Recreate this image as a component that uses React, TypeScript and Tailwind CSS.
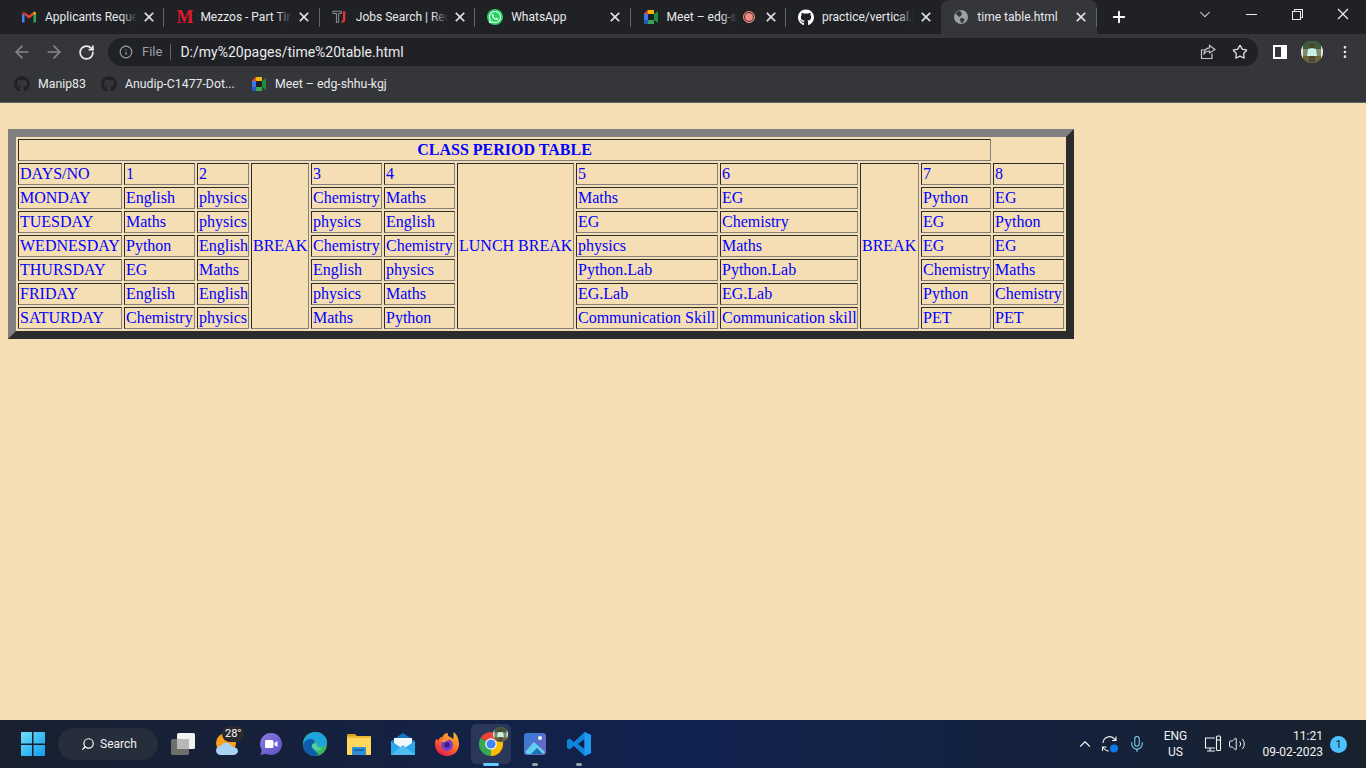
import React from "react";
import { FaGithub, FaWhatsapp } from "react-icons/fa";
import { VscClose, VscChromeMinimize, VscChromeRestore, VscChromeClose, VscChevronDown } from "react-icons/vsc";
import { ArrowLeft, ArrowRight, RotateCw, Info, Star, Plus, EllipsisVertical, Search, ChevronUp, Mic, Volume2 } from "lucide-react";

const ui = "font-['Roboto','Open_Sans',sans-serif]";

const Gmail = () => (
  <svg width="16" height="16" viewBox="0 0 16 16">
    <path d="M1 13.500V4l2.500 1.500v8H2a1 1 0 0 1-1-1z" fill="#4285f4" />
    <path d="M15 13.500V4l-2.500 1.500v8H14a1 1 0 0 0 1-1z" fill="#34a853" />
    <path d="M3.500 6V3L8 6.500 12.500 3v3L8 9.500z" fill="#ea4335" />
    <path d="M1 4.500C1 3 2.500 2.300 3.500 3v3z" fill="#c5221f" />
    <path d="M15 4.500C15 3 13.500 2.300 12.500 3v3z" fill="#fbbc04" />
  </svg>
);
const Mezzos = () => (
  <span className="font-['Liberation_Serif',serif] font-bold text-[18px] leading-none text-[#e0182d] w-4 text-center block">M</span>
);
const TJ = () => (
  <svg width="18" height="16" viewBox="0 0 18 16" fill="none">
    <path d="M1 1.500h9.500v2.500H7.500v10H5V4H1z" stroke="#9aa0a6" strokeWidth="1" />
    <path d="M11.500 1.500h3.500v9c0 3-2 4-4.500 4l.5-2.500c1 0 1.300-.5 1.300-1.500V1.500z" fill="#e8323c" />
  </svg>
);
const MeetIcon = ({ s = 16 }: { s?: number }) => (
  <svg width={s} height={s} viewBox="0 0 16 16">
    <path d="M1 5l4-4h6v4H5v1z" fill="#f4b400" />
    <path d="M1 5h4v6H1z" fill="#3b78e7" />
    <path d="M1 11h4v4H2.500A1.500 1.500 0 0 1 1 13.500z" fill="#2a56c6" />
    <path d="M5 11h6v4H5z" fill="#34a853" />
    <path d="M1 5l4-4v4z" fill="#ea4335" />
    <path d="M11 5v6h0l4 3V2l-4 3z" fill="#1e8e3e" />
    <path d="M5 5h6v6H5z" fill="#202124" />
  </svg>
);
const Globe = () => (
  <svg width="16" height="16" viewBox="0 0 16 16">
    <circle cx="8" cy="8" r="7" fill="#9aa0a6" />
    <path d="M7 1.500c-2 .5-3.500 1.500-4.500 3L5 7c1 1 1.500 1 2 .5l1-1c1-1 1-2 0-3.500zM9 9c-1 0-2 .5-2 1.500l1 3.500c2 0 3-1.500 3.500-3 .3-1-1-2-2.500-2z" fill="#35363a" />
  </svg>
);
const Share = () => (
  <svg width="16" height="16" viewBox="0 0 16 16" fill="none" stroke="#c4c7c5" strokeWidth="1.200">
    <path d="M12 9.500V14.500H1.500V6H5" />
    <path d="M9.500 1.500L15 5.500 9.500 9V7C7 7 5 8 3.800 10.500 4 7 6 4 9.500 3.800z" />
  </svg>
);
const Avatar = ({ s = 22 }: { s?: number }) => (
  <svg width={s} height={s} viewBox="0 0 22 22">
    <defs>
      <clipPath id={`av${s}`}>
        <circle cx="11" cy="11" r="11" />
      </clipPath>
    </defs>
    <g clipPath={`url(#av${s})`}>
      <rect width="22" height="22" fill="#7d8a68" />
      <rect y="0" width="22" height="8" fill="#3f5a3a" />
      <rect x="0" y="15" width="22" height="7" fill="#6a6238" />
      <rect x="0" width="2" height="22" fill="#e8e8e8" />
      <rect x="20" width="2" height="22" fill="#e8e8e8" />
      <path d="M7 8l4-1 4 1 1 7H6z" fill="#c8f0e8" />
      <circle cx="11" cy="5" r="2.200" fill="#5a3a28" />
      <rect x="8" y="15" width="6" height="6" fill="#4d4a3a" />
    </g>
  </svg>
);
const Tab = ({ icon, title, active, rec, sep = true, fade = true }: { icon: React.ReactNode; title: string; active?: boolean; rec?: boolean; sep?: boolean; fade?: boolean }) => (
  <div className={`relative flex items-center shrink-0 w-[155.400px] h-[34px] pl-3 ${active ? "bg-[#35363a] rounded-t-[8px]" : ""}`}>
    <span className="w-4 h-4 flex items-center justify-center shrink-0">{icon}</span>
    <span className={`relative ml-2 overflow-hidden whitespace-nowrap text-[12px] text-[#e8eaed] ${rec ? "w-[70px]" : "w-[92px]"}`}>
      {title}
      {fade && <span className="absolute right-0 top-0 h-full w-4 bg-gradient-to-r from-transparent to-[#202124]" />}
    </span>
    {rec && (
      <span className="ml-[6px] w-3 h-3 rounded-full bg-[#f28b82] border border-[#f28b82] shadow-[inset_0_0_0_1px_#202124] shrink-0" />
    )}
    <VscClose className="absolute left-[132px] top-[9px] text-[#e8eaed]" size={16} strokeWidth={0.8} />
    {sep && <span className="absolute right-0 top-[8px] h-[19px] w-px bg-[#5f6368]" />}
  </div>
);

const Bookmark = ({ icon, label, w }: { icon: React.ReactNode; label: string; w: string }) => (
  <div className={`flex items-center shrink-0 ${w}`}>
    <span className="w-4 h-4 flex items-center justify-center shrink-0">{icon}</span>
    <span className="ml-2 text-[12.300px] text-[#e8eaed] whitespace-nowrap">{label}</span>
  </div>
);

const cell = "border border-t-[#2e2a25] border-l-[#2e2a25] border-r-[#808080] border-b-[#808080] p-px text-left align-middle whitespace-nowrap overflow-hidden font-normal";

const widths = [104, 71, 52, 58, 71, 71, 117, 142, 138, 59, 70, 71];
const rows: [string, string, string, string, string, string, string, string, string][] = [
  ["MONDAY", "English", "physics", "Chemistry", "Maths", "Maths", "EG", "Python", "EG"],
  ["TUESDAY", "Maths", "physics", "physics", "English", "EG", "Chemistry", "EG", "Python"],
  ["WEDNESDAY", "Python", "English", "Chemistry", "Chemistry", "physics", "Maths", "EG", "EG"],
  ["THURSDAY", "EG", "Maths", "English", "physics", "Python.Lab", "Python.Lab", "Chemistry", "Maths"],
  ["FRIDAY", "English", "English", "physics", "Maths", "EG.Lab", "EG.Lab", "Python", "Chemistry"],
  ["SATURDAY", "Chemistry", "physics", "Maths", "Python", "Communication Skill", "Communication skill", "PET", "PET"],
];

const TimeTable = () => (
  <table className="table-fixed w-[1066px] border-separate border-spacing-[2px] border-[8px] border-t-[#808080] border-l-[#808080] border-r-[#2b2b2b] border-b-[#2b2b2b] font-['Liberation_Serif',serif] text-[16px] leading-[18px] text-[#0000ff]">
    <colgroup>
      {widths.map((w, i) => (
        <col key={i} style={{ width: w }} />
      ))}
    </colgroup>
    <tbody>
      <tr>
        <th colSpan={11} className={`${cell} !text-center !font-bold`}>CLASS PERIOD TABLE</th>
      </tr>
      <tr>
        <td className={cell}>DAYS/NO</td>
        <td className={cell}>1</td>
        <td className={cell}>2</td>
        <td rowSpan={7} className={cell}>BREAK</td>
        <td className={cell}>3</td>
        <td className={cell}>4</td>
        <td rowSpan={7} className={cell}>LUNCH BREAK</td>
        <td className={cell}>5</td>
        <td className={cell}>6</td>
        <td rowSpan={7} className={cell}>BREAK</td>
        <td className={cell}>7</td>
        <td className={cell}>8</td>
      </tr>
      {rows.map((r) => (
        <tr key={r[0]}>
          {r.map((c, i) => (
            <td key={i} className={cell}>{c}</td>
          ))}
        </tr>
      ))}
    </tbody>
  </table>
);

const Slot = ({ children, bar, active }: { children: React.ReactNode; bar?: boolean; active?: boolean }) => (
  <div className="relative w-[44px] h-[48px] flex items-center justify-center shrink-0">
    {active && <span className="absolute left-[2px] top-[4px] w-[40px] h-[40px] rounded-[5px] bg-white/10" />}
    <span className="relative flex">{children}</span>
    {bar && <span className={`absolute bottom-[2px] left-1/2 -translate-x-1/2 h-[3px] rounded-full ${active ? "w-4 bg-[#60cdff]" : "w-[6px] bg-[#9aa0a6]"}`} />}
  </div>
);

const WinLogo = () => (
  <svg width="24" height="24" viewBox="0 0 24 24">
    <defs>
      <linearGradient id="wl" x1="0" y1="0" x2="1" y2="1">
        <stop offset="0" stopColor="#6fe0f5" />
        <stop offset="1" stopColor="#0f9bf0" />
      </linearGradient>
    </defs>
    <path d="M0 1a1 1 0 0 1 1-1h10v11.500H0zM12.500 0H23a1 1 0 0 1 1 1v10.500H12.500zM0 13h11v11H1a1 1 0 0 1-1-1zM12.500 13H24v10a1 1 0 0 1-1 1H12.500z" fill="url(#wl)" />
  </svg>
);
const TaskView = () => (
  <svg width="26" height="24" viewBox="0 0 26 24">
    <rect x="7" y="1" width="18" height="16" rx="1.500" fill="#f1f1f1" />
    <rect x="1" y="7" width="18" height="16" rx="1.500" fill="#6e6e6e" />
    <rect x="7" y="7" width="12" height="10" fill="#b8b8b8" />
  </svg>
);
const Weather = () => (
  <div className="relative w-[24px] h-[24px]">
    <svg width="24" height="24" viewBox="0 0 24 24" className="absolute left-0 top-0">
      <circle cx="11" cy="11" r="10" fill="#f9a11b" />
      <path d="M6 23c-3 0-5-2-5-4.500S3 14 6 14c1-3 4-4 7-3 2 .5 4 2.500 4 4 4-.5 6 2 6 4s-2 4-5 4z" fill="#a9d3f5" />
    </svg>
    <span className={`absolute left-[7px] -top-[6px] px-[3px] h-[16px] rounded-full bg-[#2a2a2e] text-[11px] leading-[16px] text-white ${ui}`}>28°</span>
  </div>
);
const Chat = () => (
  <svg width="24" height="24" viewBox="0 0 24 24">
    <defs>
      <linearGradient id="ch" x1="0" y1="0" x2="1" y2="1">
        <stop offset="0" stopColor="#8c7ce0" />
        <stop offset="1" stopColor="#5b4fc4" />
      </linearGradient>
    </defs>
    <path d="M12 1a11 11 0 1 1-5 20.800L1.500 23l1.300-5A11 11 0 0 1 12 1z" fill="url(#ch)" />
    <rect x="6" y="8" width="8.500" height="8" rx="1.500" fill="#fff" />
    <path d="M15.500 11l3-2v6l-3-2z" fill="#fff" />
  </svg>
);
const Edge = () => (
  <svg width="24" height="24" viewBox="0 0 24 24">
    <defs>
      <linearGradient id="e1" x1="0" y1="0" x2="1" y2="1">
        <stop offset="0" stopColor="#33c6a5" />
        <stop offset="1" stopColor="#3bb54a" />
      </linearGradient>
    </defs>
    <circle cx="12" cy="12" r="12" fill="url(#e1)" />
    <path d="M0 12C1 4 8 0 13 0c6 0 11 5 11 10 0 3-3 5-6 5s-4-1-4-2c1-1 1-2 0-3-3-3-10-3-14 2z" fill="#1fa3dd" />
    <path d="M0 13c1-4 5-6 8-6s5 3 3 6c-1 2 0 6 4 9l1 .5C14 24 12 24 10 24 4 23 0 18 0 13z" fill="#0f5cae" />
    <path d="M9 13c1-2 3-2 4-1 1 3 3 4 6 4-2 3-5 3-7 2-2-1-4-3-3-5z" fill="#53d0a0" />
  </svg>
);
const Folder = () => (
  <svg width="24" height="22" viewBox="0 0 24 22">
    <path d="M0 2a1 1 0 0 1 1-1h7l3 3H0z" fill="#d3a21c" />
    <rect x="0" y="3" width="24" height="19" rx="1" fill="#ffd75e" />
    <rect y="3" width="24" height="2" fill="#e8b931" />
    <rect x="5" y="14" width="14" height="8" rx="1" fill="#2d8fd5" />
    <rect x="7" y="16" width="10" height="2" fill="#1568ad" />
  </svg>
);
const Mail = () => (
  <svg width="24" height="22" viewBox="0 0 24 22">
    <path d="M0 8L12 0l12 8v14H0z" fill="#1173c4" />
    <path d="M3 5h18v8l-9 5-9-5z" fill="#f3f6fa" />
    <path d="M0 8l12 8 12-8v14H0z" fill="#28a8ea" />
    <path d="M0 22L12 12l12 10z" fill="#50bdf2" />
  </svg>
);
const Firefox = () => (
  <svg width="24" height="24" viewBox="0 0 24 24">
    <defs>
      <linearGradient id="ff" x1="0.800" y1="0" x2="0.200" y2="1">
        <stop offset="0" stopColor="#ffc125" />
        <stop offset="0.500" stopColor="#ff6a2b" />
        <stop offset="1" stopColor="#e3134f" />
      </linearGradient>
    </defs>
    <path d="M12 24C5 24 0 19 0 12c0-2 .5-4 1.500-5.500C2 8 3 8.500 3.500 8 4 6 6 5 8 4.500 8 3 10 1 13 1c-1 2 0 3 2 4 1 .5 2 .5 3 2 1-1 .5-4 .5-7C22 2 24 8 24 12c0 7-5 12-12 12z" fill="url(#ff)" />
    <circle cx="12" cy="13" r="6" fill="#7a3fc4" />
    <circle cx="12" cy="13" r="2.800" fill="#3a1d8a" />
    <path d="M6 10c2-3 6-4 9-2-3 0-5 1-5 2z" fill="#ff9a2e" />
  </svg>
);
const ChromeLogo = () => (
  <svg width="24" height="24" viewBox="0 0 24 24">
    <path d="M12 12L1.600 6A12 12 0 0 1 22.400 6z" fill="#ea4335" />
    <path d="M12 12L22.400 6A12 12 0 0 1 12 24z" fill="#fbbc04" />
    <path d="M12 12L12 24A12 12 0 0 1 1.600 6z" fill="#34a853" />
    <circle cx="12" cy="12" r="5.800" fill="#fff" />
    <circle cx="12" cy="12" r="4.600" fill="#4285f4" />
  </svg>
);
const Photos = () => (
  <svg width="22" height="22" viewBox="0 0 22 22">
    <defs>
      <linearGradient id="ph" x1="0" y1="0" x2="1" y2="1">
        <stop offset="0" stopColor="#2f7fd6" />
        <stop offset="1" stopColor="#7a5fc0" />
      </linearGradient>
    </defs>
    <rect width="22" height="22" rx="3" fill="url(#ph)" />
    <circle cx="16" cy="5" r="2" fill="#f5f5f5" />
    <path d="M1 19l9-10 11 10-2 2H3z" fill="#5fd0ee" />
    <path d="M7 21l6-6 6 6z" fill="#1d6fb8" />
  </svg>
);
const VSCode = () => (
  <svg width="24" height="24" viewBox="0 0 24 24">
    <path d="M17.500 0L24 3v18l-6.500 3L7 14l-4.500 3.500L0 16v-8l2.500-1.500L7 10zM17.500 7L11 12l6.500 5z" fill="#0f84d6" />
    <path d="M17.500 0L24 3v18l-6.500 3z" fill="#1f9cf0" />
  </svg>
);
const Sync = () => (
  <svg width="20" height="20" viewBox="0 0 20 20" fill="none" stroke="#f2f2f2" strokeWidth="1.100">
    <path d="M3 9a6.500 6.500 0 0 1 11-4.500L16 6.500M16 2.500v4h-4" />
    <path d="M9 17a6.500 6.500 0 0 1-5-2.500L2.500 13M2.500 17v-4h4" />
    <circle cx="14" cy="14.500" r="4" fill="#0f78e8" stroke="none" />
  </svg>
);
const Net = () => (
  <svg width="18" height="18" viewBox="0 0 18 18" fill="none" stroke="#f2f2f2" strokeWidth="1.100">
    <path d="M11 3H1.500v10H11" />
    <path d="M6 13v2.500M3 16h8" />
    <rect x="12.500" y="1" width="4" height="14.500" rx="1" />
    <path d="M12.500 5h4" />
  </svg>
);

export default function App() {
  return (
    <div className={`w-[1366px] h-[768px] flex flex-col overflow-hidden bg-[#f5deb3] ${ui}`}>
      <div className="relative h-[38px] shrink-0 bg-[#202124] flex items-start pl-[9px]">
        <div className="absolute left-0 right-0 bottom-0 h-[4px] bg-[#35363a]" />
        <div className="relative flex items-start">
          <Tab icon={<Gmail />} title="Applicants Reque" />
          <Tab icon={<Mezzos />} title="Mezzos - Part Tim" />
          <Tab icon={<TJ />} title="Jobs Search | Rec" />
          <Tab icon={<span className="w-4 h-4 rounded-full bg-[#25d366] flex items-center justify-center"><FaWhatsapp className="text-white" size={14} /></span>} title="WhatsApp" fade={false} />
          <Tab icon={<MeetIcon />} title="Meet – edg-s" rec />
          <Tab icon={<FaGithub className="text-white" size={17} />} title="practice/vertical.h" sep={false} />
          <Tab icon={<Globe />} title="time table.html" active fade={false} />
          <Plus size={18} strokeWidth={2.500} className="text-white mt-[8px] ml-[13px]" />
        </div>
        <div className="absolute right-0 top-0 h-[28px] flex items-center text-[#e8eaed]">
          <span className="w-[46px] flex justify-center"><VscChevronDown size={16} /></span>
          <span className="w-[46px] flex justify-center"><VscChromeMinimize size={16} /></span>
          <span className="w-[46px] flex justify-center"><VscChromeRestore size={16} /></span>
          <span className="w-[46px] flex justify-center"><VscChromeClose size={16} /></span>
        </div>
      </div>
      <div className="h-[28px] shrink-0 bg-[#35363a] flex items-center">
        <div className="w-[108px] flex items-center shrink-0 pl-[12px]">
          <ArrowLeft size={20} className="text-[#84868a]" />
          <ArrowRight size={20} className="text-[#84868a] ml-[12px]" />
          <RotateCw size={17} strokeWidth={2.500} className="text-[#e8eaed] ml-[14px]" />
        </div>
        <div className="w-[1150px] h-[28px] rounded-full bg-[#202124] flex items-center pl-[11px] shrink-0">
          <Info size={14} className="text-[#9aa0a6]" />
          <span className="ml-[9px] text-[#9aa0a6] text-[13px]">File</span>
          <span className="ml-[8px] w-px h-[16px] bg-[#5f6368]" />
          <span className="ml-[9px] text-[14px] text-[#e8eaed] whitespace-nowrap">D:/my%20pages/time%20table.html</span>
          <span className="ml-auto flex items-center mr-[10px]">
            <Share />
            <Star size={16} className="text-[#dadce0] ml-[16px]" />
          </span>
        </div>
        <div className="flex items-center flex-1">
          <span className="ml-[15px] w-[14px] h-[14px] border-2 border-white bg-white flex justify-start">
            <span className="w-[6px] h-full bg-[#35363a] block" />
          </span>
          <span className="ml-[14px] flex"><Avatar /></span>
          <EllipsisVertical size={16} className="text-[#e8eaed] ml-[14px]" />
        </div>
      </div>
      <div className="h-[37px] shrink-0 bg-[#35363a] border-b border-[#5f6368] flex items-center pl-[14px]">
        <Bookmark icon={<FaGithub className="text-[#202124]" size={16} />} label="Manip83" w="w-[87px]" />
        <Bookmark icon={<FaGithub className="text-[#202124]" size={16} />} label="Anudip-C1477-Dot..." w="w-[150px]" />
        <Bookmark icon={<MeetIcon />} label="Meet – edg-shhu-kgj" w="w-[150px]" />
      </div>
      <main className="flex-1 pt-[26px] pl-2">
        <TimeTable />
      </main>
      <div className="h-[48px] shrink-0 bg-gradient-to-r from-[#18202f] via-[#11214f] via-50% to-[#18212d] flex items-center pl-[11px]">
        <Slot><WinLogo /></Slot>
        <div className="ml-[3px] w-[100px] h-[32px] rounded-full bg-[#262d3b] flex items-center pl-[23px] shrink-0">
          <Search size={14} className="text-white scale-x-[-1]" />
          <span className="ml-[5px] text-[12px] text-[#f2f2f2]">Search</span>
        </div>
        <div className="ml-[3px] flex">
          <Slot><TaskView /></Slot>
          <Slot><Weather /></Slot>
          <Slot><Chat /></Slot>
          <Slot><Edge /></Slot>
          <Slot><Folder /></Slot>
          <Slot><Mail /></Slot>
          <Slot><Firefox /></Slot>
          <Slot bar active>
            <span className="relative flex">
              <ChromeLogo />
              <span className="absolute -right-[5px] -top-[5px]"><Avatar s={15} /></span>
            </span>
          </Slot>
          <Slot bar><Photos /></Slot>
          <Slot bar><VSCode /></Slot>
        </div>
        <div className="ml-auto flex items-center text-[#f2f2f2] pr-[19px]">
          <ChevronUp size={18} strokeWidth={1.500} />
          <span className="ml-[6px] flex"><Sync /></span>
          <Mic size={18} strokeWidth={1.400} className="text-[#7fd3ee] ml-[8px]" />
          <div className="ml-[14px] w-[30px] text-center text-[12px] leading-[16px]">
            <div>ENG</div>
            <div>US</div>
          </div>
          <span className="ml-[14px] flex"><Net /></span>
          <Volume2 size={18} strokeWidth={1.300} className="ml-[6px]" />
          <div className="ml-[16px] text-right text-[12px] leading-[16px] whitespace-nowrap">
            <div>11:21</div>
            <div>09-02-2023</div>
          </div>
          <span className="ml-[7px] w-[17px] h-[17px] rounded-full bg-[#4cc2ff] text-[#10202e] text-[11px] leading-[17px] text-center">1</span>
        </div>
      </div>
    </div>
  );
}
